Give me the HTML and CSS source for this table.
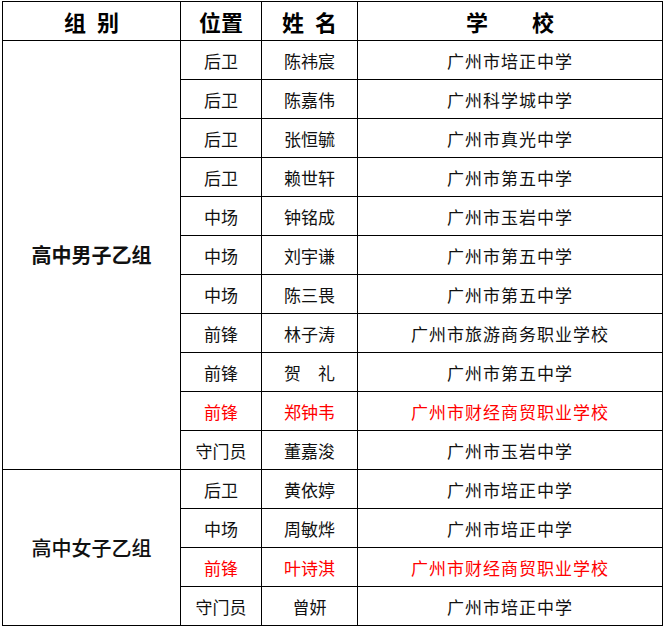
FILE: index.html
```html
<!DOCTYPE html>
<html lang="zh-CN">
<head>
<meta charset="utf-8">
<title>名单</title>
<link rel="stylesheet" href="styles.css">
</head>
<body>
<table class="roster">
  <colgroup>
    <col class="c-group">
    <col class="c-pos">
    <col class="c-name">
    <col class="c-school">
  </colgroup>
  <thead>
    <tr>
      <th>组&ensp;别</th>
      <th>位置</th>
      <th>姓&ensp;名</th>
      <th>学　　校</th>
    </tr>
  </thead>
  <tbody>
    <tr><td class="group group-boys" rowspan="11">高中男子乙组</td><td>后卫</td><td>陈祎宸</td><td class="school">广州市培正中学</td></tr>
    <tr><td>后卫</td><td>陈嘉伟</td><td class="school">广州科学城中学</td></tr>
    <tr><td>后卫</td><td>张恒毓</td><td class="school">广州市真光中学</td></tr>
    <tr><td>后卫</td><td>赖世轩</td><td class="school">广州市第五中学</td></tr>
    <tr><td>中场</td><td>钟铭成</td><td class="school">广州市玉岩中学</td></tr>
    <tr><td>中场</td><td>刘宇谦</td><td class="school">广州市第五中学</td></tr>
    <tr><td>中场</td><td>陈三畏</td><td class="school">广州市第五中学</td></tr>
    <tr><td>前锋</td><td>林子涛</td><td class="school">广州市旅游商务职业学校</td></tr>
    <tr><td>前锋</td><td>贺　礼</td><td class="school">广州市第五中学</td></tr>
    <tr class="hl"><td>前锋</td><td>郑钟韦</td><td class="school">广州市财经商贸职业学校</td></tr>
    <tr><td>守门员</td><td>董嘉浚</td><td class="school">广州市玉岩中学</td></tr>
    <tr><td class="group group-girls" rowspan="4">高中女子乙组</td><td>后卫</td><td>黄依婷</td><td class="school">广州市培正中学</td></tr>
    <tr><td>中场</td><td>周敏烨</td><td class="school">广州市培正中学</td></tr>
    <tr class="hl"><td>前锋</td><td>叶诗淇</td><td class="school">广州市财经商贸职业学校</td></tr>
    <tr><td>守门员</td><td>曾妍</td><td class="school">广州市培正中学</td></tr>
  </tbody>
</table>
</body>
</html>
```

FILE: styles.css
```css
html, body {
  margin: 0;
  padding: 0;
  background: #fff;
}

body {
  padding: 1px 0 0 2px;
  font-family: "Noto Sans CJK SC", "Noto Sans", sans-serif;
  color: #111;
}

.roster {
  border-collapse: collapse;
  width: 660px;
  table-layout: fixed;
}

.c-group { width: 178px; }
.c-pos { width: 81px; }
.c-name { width: 96px; }
.c-school { width: 305px; }

.roster th,
.roster td {
  border: 1px solid #000;
  padding: 0;
  text-align: center;
  vertical-align: middle;
  line-height: 1;
}

.roster tr {
  height: 39px;
}

.roster th {
  font-size: 22px;
  font-weight: 700;
  color: #000;
}

.roster td {
  font-size: 17px;
  font-weight: 400;
}

.roster td.school {
  letter-spacing: 1px;
}

.roster td.group {
  font-size: 20px;
  color: #111;
}

.roster td.group-boys {
  font-weight: 700;
}

.roster td.group-girls {
  font-weight: 500;
}

.roster tr.hl td {
  color: #ff0000;
}
```
